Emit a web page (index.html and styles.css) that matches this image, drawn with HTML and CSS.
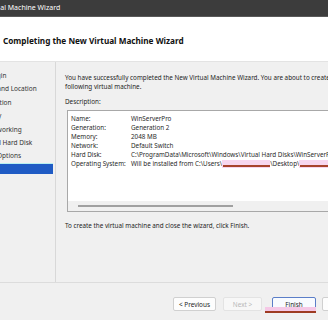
FILE: index.html
```html
<!DOCTYPE html>
<html lang="en">
<head>
    <meta charset="UTF-8">
    <title>New Virtual Machine Wizard</title>
    <link rel="stylesheet" href="styles.css">
</head>
<body>
    <div class="window">
        <div class="titlebar"><span class="title-text">New Virtual Machine Wizard</span></div>
        <div class="header">
            <h1>Completing the New Virtual Machine Wizard</h1>
        </div>
        <div class="main">
            <nav class="steps">
                <ul>
                    <li>Before You Begin</li>
                    <li>Specify Name and Location</li>
                    <li>Specify Generation</li>
                    <li>Assign Memory</li>
                    <li>Configure Networking</li>
                    <li>Connect Virtual Hard Disk</li>
                    <li>Installation Options</li>
                    <li class="active">Summary</li>
                </ul>
            </nav>
            <div class="content">
                <p class="intro">You have successfully completed the New Virtual Machine Wizard. You are about to create the<br>following virtual machine.</p>
                <p class="label">Description:</p>
                <div class="desc-box">
                    <div class="desc-rows">
                        <span class="key">Name:</span><span>WinServerPro</span>
                        <span class="key">Generation:</span><span>Generation 2</span>
                        <span class="key">Memory:</span><span>2048 MB</span>
                        <span class="key">Network:</span><span>Default Switch</span>
                        <span class="key">Hard Disk:</span><span>C:\ProgramData\Microsoft\Windows\Virtual Hard Disks\WinServerPro.vhdx</span>
                        <span class="key">Operating System:</span><span>Will be installed from C:\Users\<span class="redact r1">username</span>\Desktop\<span class="redact r2">windows_server.iso</span></span>
                    </div>
                    <div class="hscroll"><div class="thumb"></div></div>
                </div>
                <p class="finish-note">To create the virtual machine and close the wizard, click Finish.</p>
            </div>
        </div>
        <div class="footer">
            <button class="btn">&lt; Previous</button>
            <button class="btn" disabled>Next &gt;</button>
            <button class="btn primary">Finish</button>
            <button class="btn">Cancel</button>
            <div class="mark"></div>
        </div>
    </div>
</body>
</html>
```
FILE: styles.css
```css
html, body {
    margin: 0;
    width: 328px;
    height: 320px;
    overflow: hidden;
}
body {
    font-family: "Noto Sans", "Open Sans", sans-serif;
    color: #1e1e1e;
    background: #f0f0f0;
}
.window {
    width: 328px;
    height: 320px;
    display: flex;
    flex-direction: column;
}
.titlebar {
    height: 16px;
    background: #3c3c3c;
    border-bottom: 1px solid #595959;
    color: #fff;
    font-size: 7px;
    line-height: 16px;
    white-space: nowrap;
    overflow: hidden;
}
.title-text {
    display: inline-block;
    margin-left: -32px;
}
.header {
    height: 44px;
    background: #fff;
    border-bottom: 1px solid #e3e3e3;
    display: flex;
    align-items: center;
    padding-left: 3px;
}
.header h1 {
    margin: 0;
    font-size: 8.2px;
    font-weight: bold;
    color: #111;
    white-space: nowrap;
    padding-top: 2px;
}
.main {
    display: flex;
    height: 220px;
    border-bottom: 1px solid #dcdcdc;
}
.steps {
    width: 55px;
    border-right: 1px solid #d8d8d8;
    overflow: hidden;
    flex-shrink: 0;
}
.steps ul {
    list-style: none;
    margin: 0;
    padding: 7px 0 0 0;
    font-size: 6.5px;
    color: #333;
}
.steps li {
    height: 13.4px;
    line-height: 13.4px;
    white-space: nowrap;
    text-indent: -46px;
}
.steps li:nth-child(7) { text-indent: -39px; }
.steps li.active {
    background: #1f5bc4;
    color: #fff;
    margin-right: 2px;
    height: 10px;
    line-height: 10px;
    margin-top: 1px;
    box-shadow: 0 -1px 0 #b8f0f0;
}
.content {
    flex: 1;
    padding: 11px 0 0 9px;
    font-size: 6.3px;
    white-space: nowrap;
    overflow: hidden;
}
.content p {
    margin: 0;
}
.intro {
    line-height: 9px;
}
.label {
    margin-top: 6px !important;
    line-height: 9px;
}
.desc-box {
    margin: 4px 0 0 2px;
    width: 300px;
    height: 100px;
    background: #fff;
    border: 1px solid #a8a8a8;
    display: flex;
    flex-direction: column;
    justify-content: space-between;
}
.desc-rows {
    display: grid;
    grid-template-columns: 60px auto;
    padding: 4px 0 0 3px;
    line-height: 8.9px;
    color: #2a2a2a;
}
.redact {
    background: #f7d7ef;
    color: transparent;
    position: relative;
}
.redact::after {
    content: "";
    position: absolute;
    left: 1px;
    right: 0;
    bottom: 1px;
    height: 2px;
    background: #a7442c;
}
.r1 { display: inline-block; width: 48px; }
.r2 { display: inline-block; width: 40px; }
.hscroll {
    height: 10px;
    background: #f0f0f0;
    display: flex;
    align-items: center;
    padding-left: 10px;
}
.thumb {
    width: 155px;
    height: 2px;
    background: #a0a0a0;
}
.finish-note {
    margin-top: 9px !important;
    line-height: 9px;
}
.footer {
    flex: 1;
    display: flex;
    align-items: flex-start;
    padding: 14px 0 0 173px;
    position: relative;
}
.btn {
    flex-shrink: 0;
    height: 14px;
    padding: 0;
    font-family: inherit;
    font-size: 6.4px;
    color: #222;
    background: #fdfdfd;
    border: 1px solid #d0d0d0;
    border-radius: 2px;
    width: 43px;
}
.btn + .btn {
    margin-left: 7px;
}
.btn:disabled {
    width: 39px;
    color: #b8b8b8;
    background: #f7f7f7;
    border-color: #e3e3e3;
}
.btn.primary {
    margin-left: 10px;
    width: 44px;
    border-color: #5b7ec8;
    background: #f8fbff;
}
.btn.primary + .btn {
    margin-left: 6px;
}
.mark {
    position: absolute;
    left: 265px;
    top: 24px;
    width: 51px;
    height: 4px;
    background: #f5c8e6;
    border-bottom: 2.5px solid #9e3b22;
}
```
